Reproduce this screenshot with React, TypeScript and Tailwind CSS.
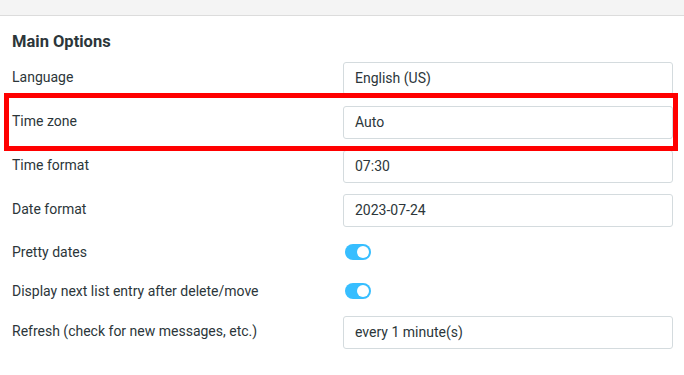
import React from 'react';

type Row =
  | { label: string; kind: 'input'; value: string }
  | { label: string; kind: 'toggle'; on: boolean };

const rows: Row[] = [
  { label: 'Language', kind: 'input', value: 'English (US)' },
  { label: 'Time zone', kind: 'input', value: 'Auto' },
  { label: 'Time format', kind: 'input', value: '07:30' },
  { label: 'Date format', kind: 'input', value: '2023-07-24' },
  { label: 'Pretty dates', kind: 'toggle', on: true },
  { label: 'Display next list entry after delete/move', kind: 'toggle', on: true },
  { label: 'Refresh (check for new messages, etc.)', kind: 'input', value: 'every 1 minute(s)' },
];

function Toggle({ on }: { on: boolean }) {
  return (
    <div
      className={`w-[26px] h-4 rounded-full flex items-center px-[2px] ${
        on ? 'bg-[#37beff] justify-end' : 'bg-[#d4dbde] justify-start'
      }`}
    >
      <div className="w-3 h-3 rounded-full bg-white" />
    </div>
  );
}

export default function App() {
  return (
    <div className="relative w-[684px] h-[375px] bg-white overflow-hidden font-['Roboto','Liberation_Sans',sans-serif] text-[#2c363a]">
      {/* top strip */}
      <div className="h-4 bg-[#f4f4f4] border-b border-[#dcdcdc]" />

      <h2 className="mt-[14px] px-3 text-[16.5px] leading-6 font-bold">Main Options</h2>

      <div className="mt-[2px] pl-3 pr-[11px]">
        {rows.map(row => (
          <div
            key={row.label}
            className={`flex items-center ${row.kind === 'toggle' ? 'h-[39px]' : 'h-11'}`}
          >
            <div className={`w-[331px] text-sm leading-5 ${row.kind === 'input' ? 'pb-[2px]' : ''}`}>
              {row.label}
            </div>
            <div className="flex-1">
              {row.kind === 'input' ? (
                <div className="h-[33px] border border-[#d4dbde] rounded-[3px] px-[11px] flex items-center text-sm">
                  {row.value}
                </div>
              ) : (
                <div className="pl-[2px]">
                  <Toggle on={row.on} />
                </div>
              )}
            </div>
          </div>
        ))}
      </div>

      {/* highlight annotation */}
      <div className="absolute left-[4px] top-[93px] w-[674px] h-[58px] border-[5px] border-[#ff0000] pointer-events-none" />
    </div>
  );
}
